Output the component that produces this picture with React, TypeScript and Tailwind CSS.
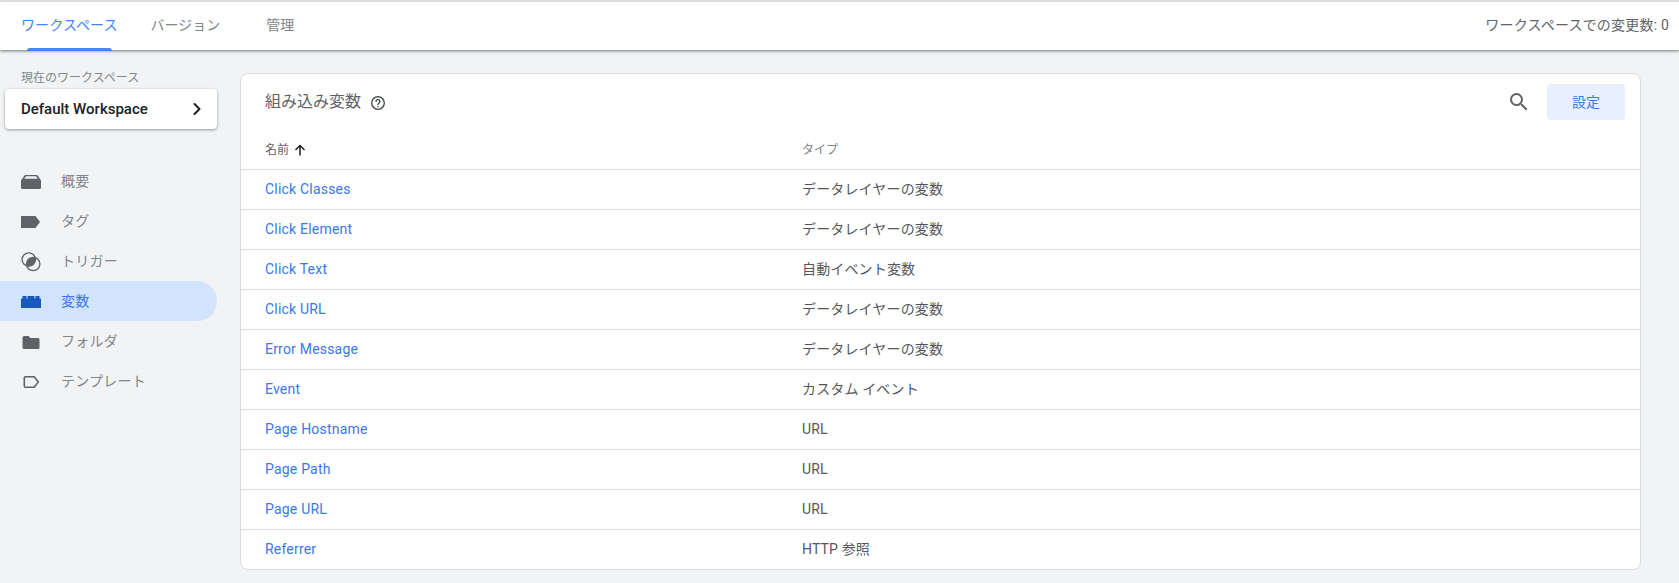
import * as React from "react"
import { ChevronRight } from "lucide-react"

const font = "font-['Roboto','Noto_Sans_CJK_JP',sans-serif]"

const rows = [
  ["Click Classes", "データレイヤーの変数"],
  ["Click Element", "データレイヤーの変数"],
  ["Click Text", "自動イベント変数"],
  ["Click URL", "データレイヤーの変数"],
  ["Error Message", "データレイヤーの変数"],
  ["Event", "カスタム イベント"],
  ["Page Hostname", "URL"],
  ["Page Path", "URL"],
  ["Page URL", "URL"],
  ["Referrer", "HTTP 参照"],
]

function OverviewIcon() {
  return (
    <svg width="20" height="20" viewBox="0 0 20 20" fill="#5f6368">
      <path d="M4.5 4h11a1.5 1.5 0 0 1 1.3.8L20 9.5V16.5A1.5 1.5 0 0 1 18.5 18H1.500A1.500 1.500 0 0 1 0 16.500V9.500L3.200 4.800A1.500 1.500 0 0 1 4.500 4z" />
      <path d="M5 5.300h10L16.700 7.800H3.300z" fill="#f1f3f4" />
    </svg>
  )
}

function TagIcon() {
  return (
    <svg width="20" height="20" viewBox="0 0 20 20" fill="#5f6368">
      <path d="M0 5h14.500L19 11l-4.500 6H0z" />
    </svg>
  )
}

function TriggerIcon() {
  return (
    <svg width="20" height="20" viewBox="0 0 20 20" fill="none" stroke="#5f6368" strokeWidth="1.300" className="overflow-visible">
      <circle cx="7.800" cy="8.500" r="6.700" />
      <circle cx="12.200" cy="13" r="6.700" />
      <path d="M13.900 6.500A6.700 6.700 0 0 1 6.100 15 6.700 6.700 0 0 1 13.900 6.500z" fill="#5f6368" stroke="none" />
    </svg>
  )
}

function VariableIcon() {
  return (
    <svg width="20" height="20" viewBox="0 0 20 20" fill="#185abc">
      <path d="M0 17V7.500h1.500V5h4v2.500h1V5h7v2.500h1V5h4v2.500H20V17z" />
    </svg>
  )
}

function FolderIcon() {
  return (
    <svg width="20" height="20" viewBox="0 0 20 20" fill="#5f6368">
      <path d="M3 5h4.500l2 2h7.500a1.500 1.500 0 0 1 1.500 1.500V16.500A1.500 1.500 0 0 1 17 18H3a1.500 1.500 0 0 1-1.500-1.500V6.500A1.500 1.500 0 0 1 3 5z" />
    </svg>
  )
}

function TemplateIcon() {
  return (
    <svg width="20" height="20" viewBox="0 0 20 20" fill="none" stroke="#5f6368" strokeWidth="1.600">
      <path d="M4.500 5.800h8.700L17.300 11l-4.100 5.200H4.500a1.200 1.200 0 0 1-1.200-1.200V7a1.200 1.200 0 0 1 1.200-1.200z" />
    </svg>
  )
}

const nav = [
  { label: "概要", icon: <OverviewIcon /> },
  { label: "タグ", icon: <TagIcon /> },
  { label: "トリガー", icon: <TriggerIcon /> },
  { label: "変数", icon: <VariableIcon />, active: true },
  { label: "フォルダ", icon: <FolderIcon /> },
  { label: "テンプレート", icon: <TemplateIcon /> },
]

export default function App() {
  return (
    <div className={`${font} h-[583px] w-[1679px] overflow-hidden bg-[#f1f3f4]`}>
      <header className="relative z-10 mt-px flex h-[49px] items-center border-t border-[#dadce0] bg-white pb-[2px] pr-[10px] shadow-[0_1px_3px_rgba(60,64,67,0.7)]">
        <div className="relative ml-[21px] text-sm tracking-[0.1px] text-[#4285f4]">
          ワークスペース
          <span className="absolute -bottom-[16px] left-[6px] h-[3px] w-[85px] rounded-t-[3px] bg-[#4285f4]" />
        </div>
        <div className="ml-[33px] text-sm text-[#80868b]">バージョン</div>
        <div className="ml-[46px] text-sm text-[#80868b]">管理</div>
        <div className="ml-auto text-sm tracking-[0.2px] text-[#5f6368]">ワークスペースでの変更数: 0</div>
      </header>

      <div className="flex">
        <aside className="w-[240px] shrink-0">
          <div className="ml-[21px] mt-[21px] text-xs leading-[14px] text-[#80868b]">現在のワークスペース</div>
          <div className="ml-[5px] mt-[4px] flex h-[40px] w-[212px] items-center justify-between rounded bg-white pl-[16px] pr-[10px] shadow-[0_1px_3px_rgba(60,64,67,0.5)]">
            <span className="text-[15px] font-medium text-[#202124]">Default Workspace</span>
            <ChevronRight size={20} strokeWidth={2.5} className="text-[#202124]" />
          </div>
          <nav className="mt-[32px] w-[217px]">
            {nav.map((item) => (
              <div
                key={item.label}
                className={`flex h-[40px] items-center rounded-r-[20px] pl-[21px] text-sm tracking-[0.25px] ${
                  item.active ? "bg-[#d2e3fc] text-[#3b78e7]" : "text-[#80868b]"
                }`}
              >
                <span className="mr-[20px] flex w-[20px] justify-center">{item.icon}</span>
                {item.label}
              </div>
            ))}
          </nav>
        </aside>

        <main className="mt-[23px] h-[497px] w-[1401px] overflow-hidden rounded-lg border border-[#dadce0] bg-white">
          <div className="flex h-[56px] items-center pl-[24px] pr-[15px]">
            <h1 className="text-base font-normal text-[#5f6368]">組み込み変数</h1>
            <svg width="16" height="16" viewBox="0 0 16 16" className="ml-[9px] mt-[2px]" fill="none" stroke="#3c4043" strokeWidth="1.300">
              <circle cx="8" cy="8" r="6.300" />
              <path d="M6.100 6.400a1.900 1.900 0 1 1 2.900 1.600c-.7.4-1 .8-1 1.500" strokeLinecap="round" />
              <path d="M8 11v1.200" />
            </svg>
            <svg width="24" height="24" viewBox="0 0 24 24" fill="#5f6368" className="ml-auto mr-[16px]">
              <path d="M15.500 14h-.79l-.28-.27A6.471 6.471 0 0 0 16 9.500 6.500 6.500 0 1 0 9.500 16c1.610 0 3.090-.59 4.230-1.570l.27.28v.79l5 4.990L20.490 19l-4.990-5zm-6 0C7.010 14 5 11.990 5 9.500S7.010 5 9.500 5 14 7.010 14 9.500 11.990 14 9.500 14z" />
            </svg>
            <button className="h-[36px] w-[78px] rounded bg-[#e8f0fe] text-sm text-[#3b78e7]">設定</button>
          </div>
          <div className="flex h-[40px] items-center border-b border-[#dadce0] pl-[24px] text-xs text-[#5f6368]">
            <div className="flex w-[537px] items-center gap-[4px]">
              名前
              <svg width="14" height="14" viewBox="0 0 14 14" fill="none" stroke="#202124" strokeWidth="1.500">
                <path d="M7 12.500V2.500M2.500 7l4.500-4.500L11.500 7" />
              </svg>
            </div>
            <div className="text-[#80868b]">タイプ</div>
          </div>
          {rows.map(([name, type], i) => (
            <div
              key={name}
              className={`flex h-[40px] items-center pb-[2px] pl-[24px] text-sm ${i < rows.length - 1 ? "border-b border-[#dadce0]" : ""}`}
            >
              <a className="w-[537px] tracking-[0.2px] text-[#3b78e7]">{name}</a>
              <span className="tracking-[0.15px] text-[#54585c]">{type}</span>
            </div>
          ))}
        </main>
      </div>
    </div>
  )
}
